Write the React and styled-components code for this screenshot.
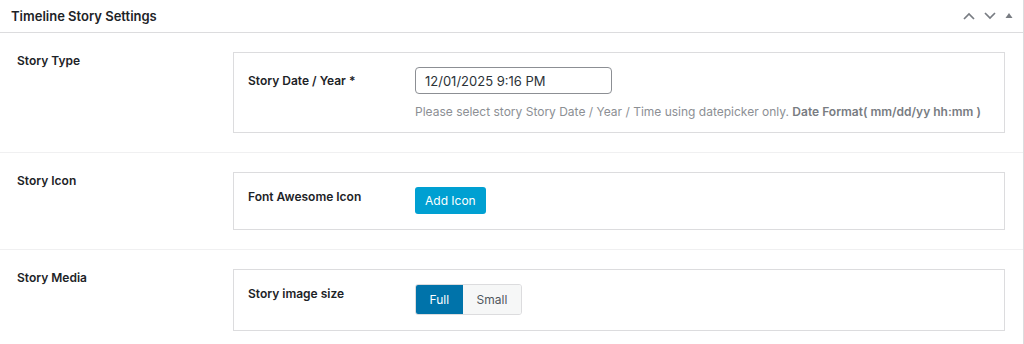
import React from "react";
import styled, { createGlobalStyle } from "styled-components";

const GlobalStyle = createGlobalStyle`
  body {
    margin: 0;
    background: #ffffff;
    font-family: Inter, "Liberation Sans", Arial, sans-serif;
    color: #1d2327;
  }
`;

const Postbox = styled.div`
  width: 1023px;
  height: 344px;
  border-right: 1px solid #dcdcde;
  background: #fff;
  overflow: hidden;
`;

const Header = styled.div`
  height: 32px;
  display: flex;
  align-items: center;
  justify-content: space-between;
  padding: 0 9px 0 11px;
  border-bottom: 1px solid #dcdcde;

  h2 {
    margin: 0;
    font-size: 13px;
    font-weight: 600;
    color: #1d2327;
  }
`;

const Handles = styled.div`
  display: flex;
  align-items: center;
  gap: 7px;
  color: #787c82;
`;

const Row = styled.div`
  display: flex;
  padding: 19px 18px 19px 17px;
  border-bottom: ${(p) => (p.last ? "none" : "1px solid #f0f0f1")};
`;

const RowLabel = styled.div`
  width: 216px;
  font-size: 12px;
  font-weight: 600;
  line-height: 16px;
  padding-top: 1px;
`;

const Field = styled.div`
  flex: 1;
  display: flex;
  border: 1px solid #dcdcde;
  padding: 14px 15px ${(p) => p.bottom || 14}px 14px;
`;

const FieldLabel = styled.div`
  width: 167px;
  font-size: 12px;
  font-weight: 600;
  line-height: 16px;
  padding-top: ${(p) => p.top || 0}px;
`;

const FieldBody = styled.div`
  display: flex;
  flex-direction: column;
`;

const DateInput = styled.input`
  box-sizing: border-box;
  width: 197px;
  height: 27px;
  border: 1px solid #8c8f94;
  border-radius: 4px;
  padding: 0 9px;
  font-family: inherit;
  font-size: 13px;
  color: #2c3338;
  background: #fff;
  outline: none;
`;

const Help = styled.p`
  margin: 9px 0 0;
  font-size: 12px;
  line-height: 17px;
  color: #8c8f94;

  b {
    font-weight: 600;
    color: #787c82;
  }
`;

const Button = styled.button`
  height: 27px;
  padding: 0 10px;
  border: none;
  border-radius: 3px;
  background: #00a0d2;
  color: #fff;
  font-family: inherit;
  font-size: 12px;
  cursor: pointer;
`;

const Segmented = styled.div`
  display: flex;
  height: 31px;
  border-radius: 3px;
  overflow: hidden;
  border: 1px solid #dcdcde;
  box-sizing: border-box;
`;

const Segment = styled.button`
  border: none;
  padding: 0 ${(p) => (p.active ? 13.5 : 14)}px;
  background: ${(p) => (p.active ? "#0073aa" : "#f6f7f7")};
  color: ${(p) => (p.active ? "#fff" : "#50575e")};
  font-family: inherit;
  font-size: 12px;
  cursor: pointer;
`;

const Chevron = ({ up }) => (
  <svg width="14" height="10" viewBox="0 0 14 10">
    <path
      d={up ? "M2 8 L7 3 L12 8" : "M2 2 L7 7 L12 2"}
      fill="none"
      stroke="currentColor"
      strokeWidth="1.7"
    />
  </svg>
);

export default function App() {
  return (
    <>
      <GlobalStyle />
      <Postbox>
        <Header>
          <h2>Timeline Story Settings</h2>
          <Handles>
            <Chevron up />
            <Chevron />
            <svg width="10" height="10" viewBox="0 0 10 10">
              <path d="M5 2 L8.5 7 L1.5 7 Z" fill="currentColor" />
            </svg>
          </Handles>
        </Header>

        <Row>
          <RowLabel>Story Type</RowLabel>
          <Field bottom={12}>
            <FieldLabel top={6}>Story Date / Year *</FieldLabel>
            <FieldBody>
              <DateInput defaultValue="12/01/2025 9:16 PM" />
              <Help>
                Please select story Story Date / Year / Time using datepicker
                only. <b>Date Format( mm/dd/yy hh:mm )</b>
              </Help>
            </FieldBody>
          </Field>
        </Row>

        <Row>
          <RowLabel>Story Icon</RowLabel>
          <Field bottom={15}>
            <FieldLabel top={2}>Font Awesome Icon</FieldLabel>
            <Button>Add Icon</Button>
          </Field>
        </Row>

        <Row last>
          <RowLabel>Story Media</RowLabel>
          <Field bottom={15}>
            <FieldLabel top={2}>Story image size</FieldLabel>
            <Segmented>
              <Segment active>Full</Segment>
              <Segment>Small</Segment>
            </Segmented>
          </Field>
        </Row>
      </Postbox>
    </>
  );
}
